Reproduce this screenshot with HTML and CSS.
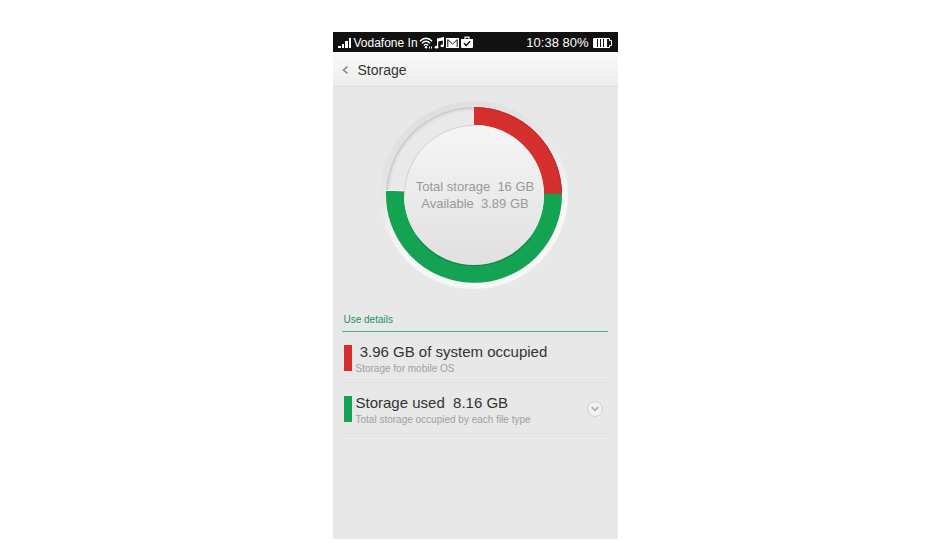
FILE: index.html
```html
<!DOCTYPE html>
<html lang="en">
<head>
    <meta charset="UTF-8">
    <meta name="viewport" content="width=device-width, initial-scale=1.0">
    <title>Storage</title>
    <link rel="stylesheet" href="styles.css">
</head>
<body>
    <div class="phone">
        <div class="status-bar">
            <svg class="icon" width="15" height="12" viewBox="0 0 15 12" fill="#fff">
                <rect x="0" y="9" width="3" height="2"/>
                <rect x="4" y="7" width="2" height="4"/>
                <rect x="7" y="4" width="3" height="7"/>
                <rect x="11" y="1" width="2" height="10"/>
            </svg>
            <span class="carrier">Vodafone In</span>
            <svg class="icon" width="14" height="12" viewBox="0 0 14 12" fill="none" stroke="#fff">
                <path d="M1 4.2C4.5 .2 9.5 .2 13 4.2" stroke-width="1.4"/>
                <path d="M3 6.4C5.4 3.6 8.6 3.6 11 6.4" stroke-width="1.4"/>
                <path d="M4.9 8.5C6.3 6.9 7.7 6.9 9.1 8.5" stroke-width="1.3"/>
                <circle cx="7" cy="10.3" r="1.2" fill="#fff" stroke="none"/>
                <path d="M10.5 9.5v2M12.5 9.5v2"/>
            </svg>
            <svg class="icon" width="11" height="12" viewBox="0 0 11 12" fill="#fff">
                <path d="M3 1.6L10 0v8.6H8.8V3.4L4.2 4.5v5.6H3z"/>
                <ellipse cx="2.5" cy="10.2" rx="1.8" ry="1.4"/>
                <ellipse cx="8.3" cy="8.8" rx="1.8" ry="1.4"/>
            </svg>
            <svg class="icon" width="13" height="12" viewBox="0 0 13 12">
                <rect x="0" y="1" width="13" height="10" fill="#fff"/>
                <path d="M1.8 10V2.6L6.5 7l4.7-4.4V10" fill="none" stroke="#111"/>
            </svg>
            <svg class="icon" width="14" height="14" viewBox="0 0 14 14">
                <path d="M5 3.5V1.2h4v2.3" fill="none" stroke="#fff" stroke-width="1.2"/>
                <path d="M1 3h12v8a1 1 0 0 1-1 1H2a1 1 0 0 1-1-1z" fill="#fff"/>
                <path d="M4 7.2l2.2 2.2L10.2 5.2" fill="none" stroke="#111" stroke-width="1.5"/>
            </svg>
            <span class="clock">10:38 80%</span>
            <svg class="icon" width="20" height="12" viewBox="0 0 20 12">
                <path d="M.5 1.5h16v2h2v5h-2v2H.5z" fill="none" stroke="#fff"/>
                <path d="M1 2h3v8H1zM5 2h2v8H5zM8 2h2v8H8zM11 2h3v8h-3z" fill="#fff"/>
            </svg>
        </div>

        <header class="title-bar">
            <button class="back" type="button" aria-label="Back">
                <svg width="7" height="8" viewBox="0 0 7 8" fill="none" stroke="#858585" stroke-width="1.5">
                    <path d="M5.5 .7L1.5 4l4 3.3"/>
                </svg>
            </button>
            <h1>Storage</h1>
        </header>

        <main>
            <div class="chart">
                <svg width="200" height="200" viewBox="0 0 200 200">
                    <defs>
                        <linearGradient id="halo" x1="0" y1="0" x2="0.35" y2="1">
                            <stop offset="0" stop-color="#dcdcdc"/>
                            <stop offset="0.45" stop-color="#e6e6e6"/>
                            <stop offset="0.8" stop-color="#f8f8f8"/>
                            <stop offset="1" stop-color="#f6f6f6"/>
                        </linearGradient>
                        <linearGradient id="disc" x1="0" y1="0" x2="0" y2="1">
                            <stop offset="0" stop-color="#f6f6f6"/>
                            <stop offset="1" stop-color="#e0e0e0"/>
                        </linearGradient>
                    </defs>
                    <circle cx="99" cy="100" r="94" fill="url(#halo)"/>
                    <circle cx="99" cy="100" r="88" fill="#e9e9e9"/>
                    <path d="M12 100A87 87 0 0 1 99 13" fill="none" stroke="#cdcdcd" stroke-width="2"/>
                    <path d="M14 100A85 85 0 0 1 99 15" fill="none" stroke="#e1e1e1" stroke-width="2"/>
                    <!-- system, then used space -->
                    <path d="M99 21A79 79 0 0 1 178 100" fill="none" stroke="#d5302e" stroke-width="18"/>
                    <path d="M99 12.5A87.5 87.5 0 0 1 186.5 100" fill="none" stroke="#b82a28"/>
                    <path d="M178 98.7A79 79 0 1 1 20.1 96" fill="none" stroke="#13a353" stroke-width="18"/>
                    <path d="M155 143A71 71 0 0 1 43 143" fill="none" stroke="#118746" stroke-width="2"/>
                    <circle cx="99" cy="100" r="70" fill="url(#disc)"/>
                    <path d="M29.5 100A69.5 69.5 0 0 1 99 30.5" fill="none" stroke="#cfcfcf"/>
                    <path d="M11 95.5H29" stroke="#f5f5f5"/>
                </svg>
                <p class="summary">Total storage  16 GB
Available  3.89 GB</p>
            </div>

            <section class="details">
                <h2>Use details</h2>
                <ul>
                    <li class="row">
                        <span class="swatch system"></span>
                        <div class="text">
                            <h3> 3.96 GB of system occupied</h3>
                            <p>Storage for mobile OS</p>
                        </div>
                    </li>
                    <li class="row">
                        <span class="swatch used"></span>
                        <div class="text">
                            <h3>Storage used  8.16 GB</h3>
                            <p>Total storage occupied by each file type</p>
                        </div>
                        <button class="expand" type="button" aria-label="Show file types">
                            <svg width="8" height="6" viewBox="0 0 8 6" fill="none" stroke="#a6a6a6" stroke-width="1.5">
                                <path d="M.7 1L4 4.5 7.3 1"/>
                            </svg>
                        </button>
                    </li>
                </ul>
            </section>
        </main>
    </div>
</body>
</html>
```
FILE: styles.css
```css
* {
    box-sizing: border-box;
}

body {
    margin: 0;
    min-height: 100vh;
    padding: 32px 0 11px;
    display: flex;
    justify-content: center;
    align-items: stretch;
    background: #fff;
    color: #333;
    font-family: "Liberation Sans", Arial, sans-serif;
}

h1, h2, h3, p, ul {
    margin: 0;
    padding: 0;
    font-weight: normal;
}

button {
    padding: 0;
    border: none;
    background: none;
    cursor: pointer;
}

svg {
    display: block;
}

.phone {
    width: 30%;
    min-width: 285px;
    background: #e8e8e8;
}

.status-bar {
    display: flex;
    align-items: center;
    gap: 1px;
    height: 20px;
    padding: 1px 5px 0;
    background: #111;
    color: #fff;
    font-size: 12px;
    white-space: nowrap;
}

.icon {
    flex: none;
}

.clock {
    margin-left: auto;
    margin-right: 3px;
    font-size: 13px;
}

.title-bar {
    display: flex;
    align-items: center;
    gap: 9px;
    height: 35px;
    padding: 1px 9px 0;
    background: linear-gradient(#fafafa, #ededed);
    border-bottom: 1px solid #dcdcdc;
}

.title-bar h1 {
    font-size: 14px;
}

.chart {
    display: grid;
    place-items: center;
    padding-top: 8px;
}

.chart > * {
    grid-area: 1 / 1;
}

.summary {
    color: #999;
    font-size: 13px;
    line-height: 17px;
    text-align: center;
    white-space: pre;
}

.details {
    padding: 16px 10px 0 9px;
}

.details h2 {
    padding: 0 2px 3px;
    border-bottom: 1px solid #3fb587;
    color: #17975a;
    font-size: 10px;
    line-height: 17px;
}

.details ul {
    list-style: none;
}

.row {
    display: flex;
    align-items: center;
    gap: 4px;
    height: 51px;
    padding: 2px 5px 0 2px;
    border-bottom: 1px solid #e0e0e0;
}

.swatch {
    width: 8px;
    height: 26px;
}

.system {
    background: #d5302e;
}

.used {
    background: #13a353;
}

.text {
    flex: 1;
    padding-top: 2px;
}

.text h3 {
    font-size: 15px;
    line-height: 19px;
    white-space: pre;
}

.text p {
    color: #a0a0a0;
    font-size: 10px;
    line-height: 15px;
}

.expand {
    display: grid;
    place-items: center;
    width: 16px;
    height: 16px;
    border: 1px solid #cfcfcf;
    border-radius: 50%;
    background: #f0f0f0;
}
```
